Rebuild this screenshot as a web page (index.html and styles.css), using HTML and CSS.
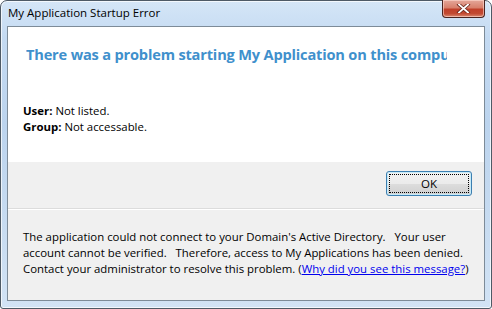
FILE: index.html
```html
<!DOCTYPE html>
<html>
<head>
<meta charset="utf-8">
<link rel="stylesheet" href="styles.css">
</head>
<body>
<div class="window">
  <div class="titlebar">
    <span class="title">My Application Startup Error</span>
    <button class="close" aria-label="Close">
      <svg width="17" height="9" viewBox="0 0 17 9"><path d="M4 0.5 L13 8.5 M13 0.5 L4 8.5" stroke="#6a2a20" stroke-width="3.4" stroke-linecap="square"/><path d="M4 0.5 L13 8.5 M13 0.5 L4 8.5" stroke="#ffffff" stroke-width="1.8" stroke-linecap="square"/></svg>
    </button>
  </div>
  <div class="client">
    <div class="main">
      <h1 class="instruction">There was a problem starting My Application on this computer</h1>
      <div class="details">
        <div><b>User:</b> Not listed.</div>
        <div><b>Group:</b> Not accessable.</div>
      </div>
    </div>
    <div class="buttons">
      <button class="ok">OK</button>
    </div>
    <div class="footer">
      The application could not connect to your Domain's Active Directory.&nbsp;&nbsp; Your user account cannot be verified.&nbsp;&nbsp; Therefore, access to My Applications has been denied. Contact your administrator to resolve this problem. (<a href="#">Why did you see this message?</a>)
    </div>
  </div>
</div>
</body>
</html>
```
FILE: styles.css
```css
html, body {
  margin: 0;
  padding: 0;
  background: #ffffff;
}
body {
  font-family: "Open Sans", "Noto Sans", sans-serif;
  font-size: 11.4px;
  color: #000;
}
.window {
  width: 492px;
  height: 309px;
  box-sizing: border-box;
  border: 1px solid #4e5a66;
  border-radius: 7px 7px 3px 3px;
  background: linear-gradient(180deg, #d5e6f7 0%, #c4daf2 12%, #bcd4ee 40%, #c8dcf1 75%, #d2e3f5 100%);
  display: flex;
  flex-direction: column;
  box-shadow: inset 0 0 0 1px rgba(255,255,255,0.7);
}
.titlebar {
  height: 25px;
  display: flex;
  align-items: flex-start;
  justify-content: space-between;
  padding: 0 6px 0 7px;
}
.title {
  padding-top: 4px;
  font-size: 11.5px;
  line-height: 16px;
  color: #000;
}
.close {
  width: 43px;
  height: 18px;
  margin-top: -1px;
  border: 1px solid #4a2420;
  border-top: none;
  border-radius: 0 0 4px 4px;
  background: linear-gradient(180deg, #e4a79a 0%, #d8806c 45%, #c0402a 55%, #c24a32 80%, #d98a72 100%);
  box-shadow: inset 0 0 0 1px rgba(255,220,210,0.6);
  padding: 0;
  display: flex;
  align-items: center;
  justify-content: center;
}
.client {
  margin: 0 6px 7px 6px;
  flex: 1;
  border: 1px solid #7d8b98;
  background: #f0f0f0;
  display: flex;
  flex-direction: column;
  overflow: hidden;
}
.main {
  background: #ffffff;
  height: 135px;
  padding: 17px 0 0 18px;
  box-sizing: border-box;
}
.instruction {
  margin: 0;
  font-size: 14.6px;
  letter-spacing: -0.18px;
  line-height: 20px;
  font-weight: 700;
  color: #4090cc;
  white-space: nowrap;
  overflow: hidden;
  width: 421px;
}
.details {
  margin-top: 39px;
  margin-left: -3px;
  line-height: 16px;
}
.buttons {
  height: 47px;
  display: flex;
  justify-content: flex-end;
  align-items: flex-start;
  padding: 9px 12px 0 0;
  box-sizing: border-box;
  border-bottom: 1px solid #dcdcdc;
}
.ok {
  width: 86px;
  height: 25px;
  font-family: inherit;
  font-size: 11.5px;
  color: #000;
  border: 1px solid #3c7fb1;
  border-radius: 3px;
  background: linear-gradient(180deg, #f2f2f2 0%, #ebebeb 50%, #dddddd 51%, #cfcfcf 100%);
  outline: 1px dotted #000;
  outline-offset: -4px;
  box-shadow: inset 0 0 0 1px #c6eaf8;
}
.footer {
  padding: 19px 10px 0 15px;
  line-height: 16px;
  border-top: 1px solid #ffffff;
}
.footer a {
  color: #0000ee;
  text-decoration: underline;
}
```
